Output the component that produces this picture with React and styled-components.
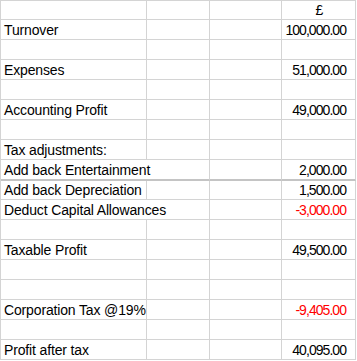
import React from 'react';
import styled, { createGlobalStyle } from 'styled-components';

const Global = createGlobalStyle`
  html, body {
    margin: 0;
    padding: 0;
    background: #fff;
  }
`;

const Sheet = styled.div`
  width: 356px;
  border-top: 1px solid #d4d4d4;
  border-left: 1px solid #d4d4d4;
  box-sizing: border-box;
  font-family: "Liberation Sans", Arial, sans-serif;
  font-size: 14px;
  color: #000;
`;

const Row = styled.div`
  display: grid;
  grid-template-columns: 146px 63px 72px 74px;
  height: ${(props) => props.h}px;
`;

const Cell = styled.div`
  box-sizing: border-box;
  border-right: 1px solid #d4d4d4;
  border-bottom: ${(props) => props.thick ? '2px solid #c4c4c4' : '1px solid #d4d4d4'};
  display: flex;
  align-items: flex-end;
  justify-content: flex-start;
  padding: 0 2px 1px 3px;
  white-space: nowrap;
  line-height: 16px;
  letter-spacing: -0.15px;
  grid-column: ${(props) => props.span ? 'span 2' : 'auto'};
`;

const NumCell = styled(Cell)`
  justify-content: ${(props) => props.center ? 'center' : 'flex-end'};
  padding-right: ${(props) => props.center ? '2px' : '9px'};
  letter-spacing: -0.95px;
  color: ${(props) => props.neg ? '#ff0000' : '#000'};
`;

const rows = [
  { head: true, h: 19 },
  { label: 'Turnover', value: '100,000.00' },
  {},
  { label: 'Expenses', value: '51,000.00' },
  {},
  { label: 'Accounting Profit', value: '49,000.00' },
  {},
  { label: 'Tax adjustments:' },
  { label: 'Add back Entertainment', value: '2,000.00', span: true, thick: true, h: 21 },
  { label: 'Add back Depreciation', value: '1,500.00', h: 19 },
  { label: 'Deduct Capital Allowances', value: '-3,000.00', neg: true, span: true },
  {},
  { label: 'Taxable Profit', value: '49,500.00' },
  {},
  {},
  { label: 'Corporation Tax @19%', value: '-9,405.00', neg: true },
  {},
  { label: 'Profit after tax', value: '40,095.00' },
];

const App = () => (
  <>
    <Global />
    <Sheet>
      {rows.map((r, i) => (
        <Row key={i} h={r.h || 20}>
          <Cell span={r.span} thick={r.thick}>{r.label}</Cell>
          {!r.span && <Cell thick={r.thick} />}
          <Cell thick={r.thick} />
          {r.head ? (
            <NumCell center>£</NumCell>
          ) : (
            <NumCell neg={r.neg} thick={r.thick}>{r.value}</NumCell>
          )}
        </Row>
      ))}
    </Sheet>
  </>
);

export default App;
